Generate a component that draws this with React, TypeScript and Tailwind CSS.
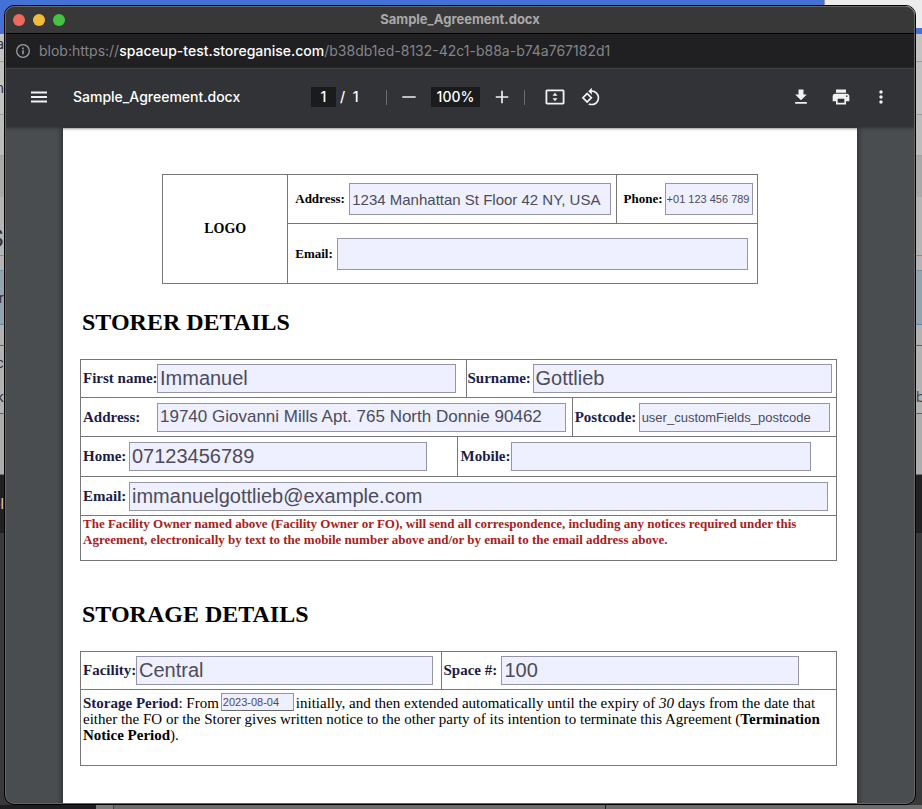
import { useState } from "react";
import type { ReactNode } from "react";

// Rows of the page that sits behind the popup window
const backdropRows = [
  { height: "h-[28px] items-start", tone: "bg-[#c4c4c4] border-[#9c9c9c]", left: "a", right: "" },
  { height: "h-[53px] items-center", tone: "bg-[#c2c2c2] border-[#9c9c9c]", left: "n", right: "" },
  { height: "h-[41px] items-center", tone: "bg-[#bdbdbd] border-[#a2a2a2]", left: "", right: "" },
  { height: "h-[41px] items-center", tone: "bg-[#a9a9a9] border-[#a9a9a9]", left: "", right: "" },
  { height: "h-[59px] items-end text-2xl", tone: "bg-[#b5b5b5] border-[#8c8c8c]", left: "S", right: "" },
  { height: "h-[15px] items-center", tone: "bg-[#b5b5b5] border-[#6f8fa3]", left: "", right: "" },
  { height: "h-[54px] items-center", tone: "bg-[#93a4b1] border-[#5f87a5]", left: "r", right: "" },
  { height: "h-[21px] items-center", tone: "bg-[#b2b2b2] border-[#3f62b5]", left: "", right: "" },
  { height: "h-[34px] items-center", tone: "bg-[#b2b2b2] border-[#b2b2b2]", left: "c", right: "" },
  { height: "h-[34px] items-center", tone: "bg-[#b2b2b2] border-[#3f62b5]", left: "k", right: "b" },
  { height: "h-[61px] items-center", tone: "bg-[#adadad] border-[#6b6b6b]", left: "", right: "" },
];

function Backdrop() {
  return (
    <div
      aria-hidden="true"
      className="absolute inset-0 flex flex-col overflow-hidden text-sm"
    >
      <div className="flex h-[34px] shrink-0 bg-[#4371d6]">
        <div className="flex-1" />
        <div className="h-7 w-[98px] border-l border-[#999] bg-[#ececec]" />
      </div>
      {backdropRows.map((row, index) => (
        <div
          key={index}
          className={`flex shrink-0 justify-between overflow-hidden border-b ${row.height} ${row.tone}`}
        >
          <span className="flex w-1 justify-end text-[#333]">{row.left}</span>
          <span className="w-1.5 text-[#444]">{row.right}</span>
        </div>
      ))}
      <div className="flex h-[58px] shrink-0 items-center bg-[#212123]">
        <span className="flex w-1 justify-end text-[#ddd]">pl</span>
      </div>
      <div className="flex-1 bg-[#38393b]" />
      <div className="flex h-1 shrink-0 bg-[#6c6c6c]">
        <div className="w-24 bg-[#1d1d1f]" />
        <div className="w-[18px] border-r border-[#444] bg-[#7b7b7b]" />
        <div className="flex-1 border-r border-[#222]" />
        <div className="w-[316px]" />
      </div>
    </div>
  );
}

function TitleBar() {
  return (
    <div className="relative flex h-[27px] items-center justify-center rounded-t-lg border-b border-black bg-[#383838]">
      <div className="absolute left-[7px] flex gap-2">
        <button aria-label="Close" className="size-3 rounded-full bg-[#ed6a5e]" />
        <button aria-label="Minimize" className="size-3 rounded-full bg-[#f0bc3e]" />
        <button aria-label="Zoom" className="size-3 rounded-full bg-[#45c442]" />
      </div>
      <span className="text-[13px] font-bold text-[#a9a9a9]">
        Sample_Agreement.docx
      </span>
    </div>
  );
}

function AddressBar() {
  return (
    <div className="flex h-[35px] items-center gap-2 border-b border-[#5c5c5c] bg-[#202022] pl-[9px] text-sm text-[#84858a]">
      <svg viewBox="0 0 16 16" className="size-4" fill="none" stroke="#9aa0a6">
        <circle cx="8" cy="8" r="6.3" strokeWidth="1.3" />
        <path d="M8 7.2v4" strokeWidth="1.6" />
        <path d="M8 4.6v1.6" strokeWidth="1.6" />
      </svg>
      <span className="whitespace-nowrap">
        blob:https://
        <span className="font-medium text-white">spaceup-test.storeganise.com</span>
        /b38db1ed-8132-42c1-b88a-b74a767182d1
      </span>
    </div>
  );
}

function ToolButton({ label, children }: { label: string; children: ReactNode }) {
  return (
    <button
      aria-label={label}
      className="flex size-8 items-center justify-center rounded-full text-[#f1f1f1] hover:bg-white/10"
    >
      <svg viewBox="0 0 24 24" className="size-5" fill="currentColor">
        {children}
      </svg>
    </button>
  );
}

function Toolbar() {
  const [page, setPage] = useState("1");
  const [zoom, setZoom] = useState("100%");

  return (
    <div className="relative z-10 grid h-14 grid-cols-[1fr_auto_1fr] items-center bg-[#323336] text-sm font-medium text-white shadow-[0_1px_3px_2px_rgba(45,46,49,0.9)]">
      <div className="flex items-center gap-[18px] pl-[17px]">
        <ToolButton label="Menu">
          <path d="M2.400 18.500h19.200v-2.200H2.400v2.200zm0-5.400h19.200v-2.200H2.400v2.200zm0-7.600v2.200h19.200V5.500H2.400z" />
        </ToolButton>
        <span>Sample_Agreement.docx</span>
      </div>

      <div className="flex items-center pr-0.5">
        <input
          aria-label="Page number"
          value={page}
          onChange={(e) => setPage(e.target.value)}
          className="h-5 w-[25px] bg-[#191b1c] text-center"
        />
        <span className="w-[50px] pl-1">/&nbsp; 1</span>
        <div className="h-[15px] w-px bg-[#6b6b6d]" />
        <div className="flex w-11 justify-center">
          <ToolButton label="Zoom out">
            <path d="M4 11h16v2H4z" />
          </ToolButton>
        </div>
        <input
          aria-label="Zoom level"
          value={zoom}
          onChange={(e) => setZoom(e.target.value)}
          className="h-5 w-[49px] bg-[#191b1c] text-center"
        />
        <div className="flex w-11 justify-center">
          <ToolButton label="Zoom in">
            <path d="M19.500 13H13v6.500h-2V13H4.500v-2H11V4.500h2V11h6.500z" />
          </ToolButton>
        </div>
        <div className="h-[15px] w-px bg-[#6b6b6d]" />
        <div className="flex gap-1 pl-3.5">
          <ToolButton label="Fit to page">
            <path d="M21.500 3h-19C1.300 3 .6 3.900.6 5v14c0 1.100.7 2 1.900 2h19c1.200 0 1.900-.9 1.900-2V5c0-1.100-.7-2-1.900-2zm-.3 16H2.800V5h18.400v14zM12 6.800 9 10.600h6L12 6.800zm0 10.400 3-3.800H9l3 3.800z" />
          </ToolButton>
          <ToolButton label="Rotate">
            <path d="M7.340 6.410.86 12.900l6.490 6.480 6.490-6.480-6.500-6.490zM3.690 12.900l3.660-3.660L11 12.900l-3.660 3.660-3.650-3.660zm15.670-6.260A8.950 8.950 0 0 0 13 4V.76L8.760 5 13 9.240V6c1.790 0 3.580.68 4.950 2.050a7.007 7.007 0 0 1 0 9.900 6.973 6.973 0 0 1-7.790 1.440l-1.490 1.490C10.020 21.620 11.510 22 13 22c2.300 0 4.610-.88 6.360-2.640a8.980 8.980 0 0 0 0-12.720z" />
          </ToolButton>
        </div>
      </div>

      <div className="flex justify-end gap-2 pr-[17px]">
        <ToolButton label="Download">
          <path d="M19 9h-4V3H9v6H5l7 7 7-7zM5 18v2h14v-2H5z" />
        </ToolButton>
        <ToolButton label="Print">
          <path d="M19 8H5c-1.660 0-3 1.340-3 3v6h4v4h12v-4h4v-6c0-1.660-1.340-3-3-3zm-3 11H8v-5h8v5zm3-7c-.55 0-1-.45-1-1s.45-1 1-1 1 .45 1 1-.45 1-1 1zm-1-9H6v4h12V3z" />
        </ToolButton>
        <ToolButton label="More actions">
          <path d="M12 8c1.100 0 2-.9 2-2s-.9-2-2-2-2 .9-2 2 .9 2 2 2zm0 2c-1.100 0-2 .9-2 2s.9 2 2 2 2-.9 2-2-.9-2-2-2zm0 6c-1.100 0-2 .9-2 2s.9 2 2 2 2-.9 2-2-.9-2-2-2z" />
        </ToolButton>
      </div>
    </div>
  );
}

interface FieldProps {
  id: string;
  label: string;
  value?: string;
  labelClass: string;
  inputClass: string;
  className?: string;
}

function Field({ id, label, value = "", labelClass, inputClass, className = "" }: FieldProps) {
  return (
    <div className={`flex min-w-0 items-center border-r border-[#777] ${className}`}>
      <label htmlFor={id} className={`shrink-0 font-bold whitespace-nowrap ${labelClass}`}>
        {label}
      </label>
      <input
        id={id}
        defaultValue={value}
        className={`min-w-0 flex-1 border border-[#9495a6] bg-[#eeefff] px-0.5 font-['Liberation_Sans',Arial,sans-serif] text-[#4c4c5a] ${inputClass}`}
      />
    </div>
  );
}

function CompanyTable() {
  const label = "text-[13px] text-black";

  return (
    <div className="mx-auto flex w-3/4 border-t border-l border-[#777]">
      <div className="flex w-[125px] shrink-0 items-center justify-center border-r border-b border-[#777] text-sm font-bold">
        LOGO
      </div>
      <div className="min-w-0 flex-1">
        <div className="grid h-[49px] grid-cols-[328fr_141fr] border-b border-[#777]">
          <Field id="company-address" label="Address:" value="1234 Manhattan St Floor 42 NY, USA" labelClass={`${label} w-[54px]`} inputClass="h-8 text-[15px]" className="pl-[7px] pr-[5px]" />
          <Field id="company-phone" label="Phone:" value="+01 123 456 789" labelClass={`${label} w-[41px]`} inputClass="h-8 px-px text-[11px]" className="pl-[7px] pr-1" />
        </div>
        <div className="grid h-[60px] border-b border-[#777]">
          <Field id="company-email" label="Email:" labelClass={`${label} w-[42px]`} inputClass="h-8 text-[15px]" className="pl-[7px] pr-[9px]" />
        </div>
      </div>
    </div>
  );
}

function StorerTable() {
  const label = "text-[15px] text-[#1c1c48]";

  return (
    <div className="border-t border-l border-[#777]">
      <div className="grid h-[38px] grid-cols-[385fr_370fr] border-b border-[#777]">
        <Field id="first-name" label="First name:" value="Immanuel" labelClass={`${label} w-[74px]`} inputClass="h-[29px] text-xl" className="pl-0.5 pr-2.5" />
        <Field id="surname" label="Surname:" value="Gottlieb" labelClass={`${label} w-[65px]`} inputClass="h-[29px] text-xl" className="pl-px pr-1" />
      </div>
      <div className="grid h-[39px] grid-cols-[491fr_264fr] border-b border-[#777]">
        <Field id="address" label="Address:" value="19740 Giovanni Mills Apt. 765 North Donnie 90462" labelClass={`${label} w-[74px]`} inputClass="h-[29px] text-[17px]" className="pl-0.5 pr-1.5" />
        <Field id="postcode" label="Postcode:" value="user_customFields_postcode" labelClass={`${label} w-16`} inputClass="h-[29px] text-[13px]" className="pl-0.5 pr-1.5" />
      </div>
      <div className="grid h-10 grid-cols-[377fr_378fr] border-b border-[#777]">
        <Field id="home" label="Home:" value="07123456789" labelClass={`${label} w-[46px]`} inputClass="h-[29px] text-xl" className="pl-0.5 pr-[30px]" />
        <Field id="mobile" label="Mobile:" labelClass={`${label} w-[51px]`} inputClass="h-[29px] text-xl" className="pl-0.5 pr-[25px]" />
      </div>
      <div className="grid h-[39px] border-b border-[#777]">
        <Field id="email" label="Email:" value="immanuelgottlieb@example.com" labelClass={`${label} w-[46px]`} inputClass="h-[29px] text-xl" className="pl-0.5 pr-2" />
      </div>
      <p className="h-[45px] border-r border-b border-[#777] pl-0.5 text-[13px] leading-4 font-bold text-[#a8201a]">
        The Facility Owner named above (Facility Owner or FO), will send all
        correspondence, including any notices required under this
        <br />
        Agreement, electronically by text to the mobile number above and/or by
        email to the email address above.
      </p>
    </div>
  );
}

function StorageTable() {
  const label = "text-[15px] text-[#1c1c48]";

  return (
    <div className="border-t border-l border-[#777]">
      <div className="grid h-[38px] grid-cols-[361fr_394fr] border-b border-[#777]">
        <Field id="facility" label="Facility:" value="Central" labelClass={`${label} w-[53px]`} inputClass="h-[29px] text-xl" className="pl-0.5 pr-2" />
        <Field id="space" label="Space #:" value="100" labelClass={`${label} w-[58px]`} inputClass="h-[29px] text-xl" className="pl-px pr-[37px]" />
      </div>
      <div className="h-[76px] border-r border-b border-[#777] pt-[3px] pl-0.5 text-[15px] leading-4">
        <div className="flex items-end gap-0.5">
          <label htmlFor="start-date" className="whitespace-nowrap">
            <b className="text-[#1c1c48]">Storage Period</b>: From
          </label>
          <input
            id="start-date"
            defaultValue="2023-08-04"
            className="h-[18px] w-[73px] border border-[#9495a6] border-b-[#666] bg-[#eeefff] px-px font-['Liberation_Sans',Arial,sans-serif] text-[11px] text-[#4c4c5a]"
          />
          <span className="whitespace-nowrap">
            initially, and then extended automatically until the expiry of{" "}
            <i>30</i> days from the date that
          </span>
        </div>
        <p>
          either the FO or the Storer gives written notice to the other party of
          its intention to terminate this Agreement (<b>Termination</b>
          <br />
          <b>Notice Period</b>).
        </p>
      </div>
    </div>
  );
}

export default function App() {
  return (
    <div className="relative flex min-h-screen pt-[5px] pr-1.5 pb-1 pl-1 font-[Inter,sans-serif]">
      <Backdrop />
      <div className="relative flex flex-1 overflow-hidden rounded-[10px] border border-black">
        <div className="flex flex-1 flex-col overflow-hidden rounded-[9px] border border-[#666] bg-[#4a4d50]">
          <TitleBar />
          <AddressBar />
          <Toolbar />

          {/* Document page */}
          <main className="mx-auto mt-[3px] w-full max-w-[794px] flex-1 bg-white pt-[46px] pb-9 font-['Liberation_Serif','Times_New_Roman',serif] text-black shadow-[0_0_5px_2px_rgba(0,0,0,0.35)]">
            <CompanyTable />
            <div className="mr-5 ml-[17px]">
              <h2 className="mt-6 mb-[23px] pl-0.5 text-2xl leading-7 font-bold">
                STORER DETAILS
              </h2>
              <StorerTable />
              <h2 className="mt-[39px] mb-[23px] pl-0.5 text-2xl leading-7 font-bold">
                STORAGE DETAILS
              </h2>
              <StorageTable />
            </div>
          </main>
        </div>
      </div>
    </div>
  );
}
